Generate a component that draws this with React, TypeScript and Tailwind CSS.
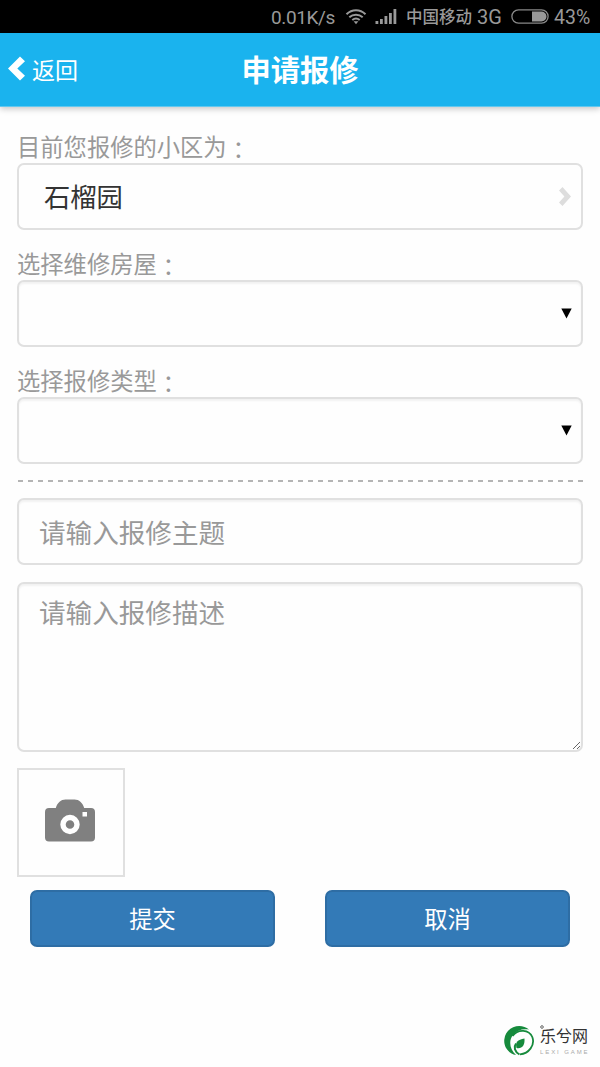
import type { ReactNode } from 'react';

function StatusBar() {
  return (
    <div className="flex h-[33px] items-center justify-end bg-black pr-[9px] text-[#999] font-['Roboto','Noto_Sans_CJK_SC',sans-serif] text-[19px] leading-[33px] whitespace-nowrap">
      <span className="w-[66px] pt-[2px] text-[19px] tracking-[-0.4px]">0.01K/s</span>
      <svg className="ml-[8px] h-[17px] w-[22px]" viewBox="0 0 22 17" fill="none" stroke="#999" strokeWidth="2">
        <path d="M1.5 6.2C7 .9 15 .9 20.5 6.2" />
        <path d="M4.3 9.3c3.8-3.5 9.6-3.5 13.4 0" />
        <path d="M7.3 12.1c2.2-1.9 5.2-1.9 7.4 0" />
        <path d="M8.6 13.3h4.8L11 16.2z" fill="#999" stroke="none" />
      </svg>
      <svg className="ml-[8px] h-[15px] w-[22px]" viewBox="0 0 22 15" fill="#999">
        <rect x="0.5" y="12" width="2.8" height="3" />
        <rect x="5" y="10" width="2.8" height="5" />
        <rect x="9.5" y="7" width="2.8" height="8" />
        <rect x="14" y="4" width="2.8" height="11" />
        <rect x="18.5" y="0" width="2.8" height="15" />
      </svg>
      <span className="ml-[9px] w-[66px] pt-px text-[16.5px] font-medium">中国移动</span>
      <span className="ml-[5px] w-[27px] pt-px text-[20px]">3G</span>
      <svg className="ml-[7px] h-[15px] w-[38px]" viewBox="0 0 38 15">
        <rect x="0.9" y="0.9" width="36.2" height="13.2" rx="6.6" fill="none" stroke="#888" strokeWidth="1.3" />
        <path d="M21 2.5h9.500a5 5 0 0 1 0 10H21z" fill="#999" />
      </svg>
      <span className="ml-[5px] w-[37px] pt-px text-[19.5px]">43%</span>
    </div>
  );
}

function Header() {
  return (
    <header className="grid h-[74px] grid-cols-3 items-center border-b border-[#62c8ef] bg-[#1ab3ee] text-white shadow-[0_2px_6px_rgba(0,0,0,0.22)]">
      <button className="flex items-center pb-[3px] pl-[8px] text-left text-[23px] leading-none">
        <svg className="h-[25px] w-[17px]" viewBox="0 0 17 25" fill="#fff">
          <path d="M12 0.5 17 5.2 9.3 12.5 17 19.8 12 24.5 0 12.5z" />
        </svg>
        <span className="ml-[7px] pt-[2px]">返回</span>
      </button>
      <h1 className="pb-[2px] text-center text-[29.3px] leading-none font-bold">申请报修</h1>
    </header>
  );
}

function Label({ children }: { children: ReactNode }) {
  return (
    <label className="block h-[33px] text-[23.3px] leading-[32px] text-[#999]">
      {children}
      <span className="align-[-3px] font-['Noto_Sans_CJK_TC',sans-serif] leading-none" lang="zh-TW">：</span>
    </label>
  );
}

function SelectBox() {
  return (
    <div className="flex h-[67px] items-center justify-end rounded-[7px] border-2 border-[#e0e0e0] pr-[9px] shadow-[inset_0_2px_2px_rgba(0,0,0,0.05)]">
      <svg className="h-[11px] w-[11px]" viewBox="0 0 11 11">
        <path d="M0.3 0.5h10.4L5.5 10.5z" fill="#000" />
      </svg>
    </div>
  );
}

function Camera() {
  return (
    <svg className="h-[43px] w-[50px]" viewBox="0 0 50 43">
      <path
        fill="#808080"
        d="M4 9h6.8C12.500 3.500 16 .5 20.500 .5h9c4.500 0 8 3 9.700 8.500H46a4 4 0 0 1 4 4v25.500a4 4 0 0 1-4 4H4a4 4 0 0 1-4-4V13a4 4 0 0 1 4-4z"
      />
      <circle cx="25" cy="25.500" r="7" fill="none" stroke="#fff" strokeWidth="5.4" />
      <rect x="37.500" y="13" width="4.500" height="4.500" fill="#fff" />
    </svg>
  );
}

function Logo() {
  return (
    <div className="flex items-center">
      <svg className="h-[31px] w-[31px]" viewBox="0 0 31 31">
        <path fill="#168a3c" d="M25 4.5C17-2.5 2 1 .3 14.5-.5 22 4.5 28.5 12 30 5.5 24 4.5 15.5 9 10 13 5 18.5 3.5 25 4.5z" />
        <path d="M8.5 11C14 3.5 25 4.5 28.3 12c3 8-3.3 16.5-12.3 17.3" fill="none" stroke="#168a3c" strokeWidth="1.8" />
        <path fill="#168a3c" d="M20.5 13.5c-7 1-9.5 4-8 9.5 5.5 1 8.5-2.5 8-9.5z" />
        <path d="M12 18.5c-2.5 3.5-1.5 8 3.5 11" fill="none" stroke="#168a3c" strokeWidth="2" />
      </svg>
      <div className="relative ml-[5px] w-[51px]">
        <svg className="absolute top-0 left-0 h-[4px] w-[4px]" viewBox="0 0 4 4">
          <circle cx="2" cy="2" r="1.3" fill="none" stroke="#666" />
        </svg>
        <div className="pb-[3px] text-[16px] leading-[20px] text-[#333]">乐兮网</div>
        <div className="font-['Liberation_Sans',sans-serif] text-[6px] leading-[8px] tracking-[1.9px] whitespace-nowrap text-[#aaa]">LEXI GAME</div>
      </div>
    </div>
  );
}

export default function App() {
  return (
    <div className="flex h-[1067px] w-[600px] flex-col overflow-hidden bg-[#fefefe] font-['Noto_Sans_CJK_SC',sans-serif]">
      <StatusBar />
      <Header />
      <main className="px-[17px] pt-[23px]">
        <Label>目前您报修的小区为</Label>
        <div className="flex h-[67px] items-center justify-between rounded-[7px] border-2 border-[#e0e0e0] pr-[10px] pb-px pl-[25px] text-[26.3px] text-[#333]">
          <span>石榴园</span>
          <svg className="h-[19px] w-[12px]" viewBox="0 0 12 19" fill="#ddd">
            <path d="M3.5 0 12 9.5 3.5 19 0 15.5 5.4 9.5 0 3.5z" />
          </svg>
        </div>
        <div className="mt-[17px]">
          <Label>选择维修房屋</Label>
          <SelectBox />
        </div>
        <div className="mt-[17px]">
          <Label>选择报修类型</Label>
          <SelectBox />
        </div>
        <svg className="mt-[16px] block h-[2px] w-full">
          <path d="M0 1h566" stroke="#b4b4b4" strokeWidth="2" strokeDasharray="5 5" strokeDashoffset="-1" />
        </svg>
        <input
          className="mt-[16px] block h-[67px] w-full rounded-[7px] border-2 border-[#e0e0e0] px-[20px] text-[26.6px] shadow-[inset_0_2px_2px_rgba(0,0,0,0.05)] placeholder:text-[#999]"
          placeholder="请输入报修主题"
        />
        <textarea
          className="mt-[17px] block h-[170px] w-full rounded-[7px] border-2 border-[#e0e0e0] px-[20px] pt-[9px] text-[26.6px] leading-[38px] shadow-[inset_0_2px_2px_rgba(0,0,0,0.05)] placeholder:text-[#999]"
          placeholder="请输入报修描述"
        />
        <div className="mt-[16px] flex h-[109px] w-[108px] items-start border-2 border-[#e0e0e0] pt-[29px] pl-[26px]">
          <Camera />
        </div>
        <div className="mt-[13px] flex justify-between px-[13px] text-[23.3px] text-white">
          <button className="h-[57px] w-[245px] rounded-[7px] border-2 border-[#2e6da4] bg-[#337ab7]">提交</button>
          <button className="h-[57px] w-[245px] rounded-[7px] border-2 border-[#2e6da4] bg-[#337ab7]">取消</button>
        </div>
      </main>
      <footer className="mt-auto flex justify-end pr-[9px] pb-[11px]">
        <Logo />
      </footer>
    </div>
  );
}
